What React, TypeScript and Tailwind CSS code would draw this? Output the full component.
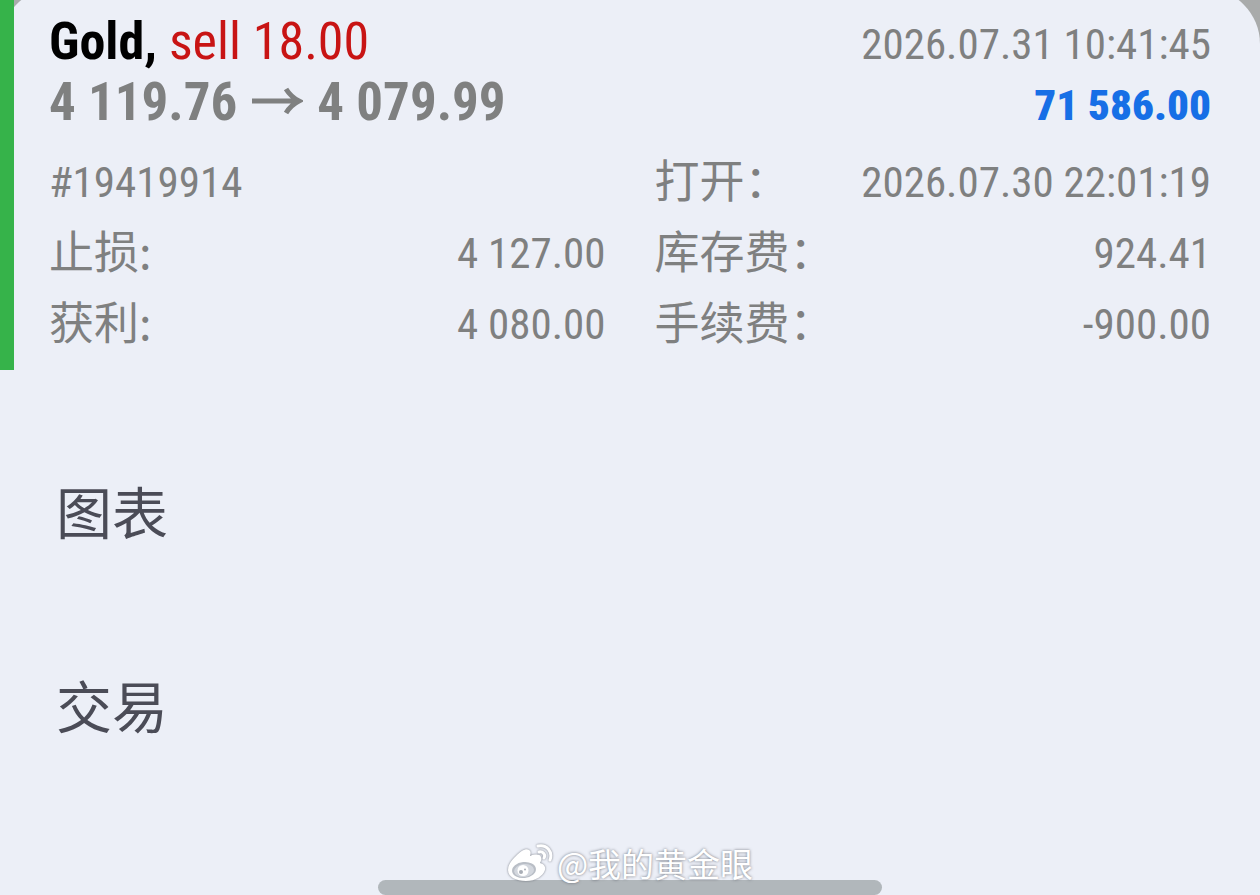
import type { ReactNode } from 'react';

function Detail({ label, value }: { label: ReactNode; value?: string }) {
  return (
    <div className="flex items-center justify-between">
      <dt>{label}</dt>
      <dd>{value}</dd>
    </div>
  );
}

function Label({ children }: { children: string }) {
  return <span className="block h-[71px] font-['Noto_Sans_CJK_SC',sans-serif] text-[45px] leading-[64px]">{children}</span>;
}

function WeiboMark() {
  return (
    <svg viewBox="0 0 46 40" className="h-10 w-[46px] drop-shadow-[0_0_1px_rgba(90,95,105,0.8)]" aria-hidden="true">
      <path
        fill="#fff"
        d="M9 13c5-5 10-8 13-6 2 1 2 3 1 6 5-2 10-2 11 1 1 2 0 4-1 6 4 1 6 4 5 7-2 6-9 11-19 11C9 38 1 34 1 27c0-5 3-9 8-14z"
      />
      <ellipse cx="17" cy="27" rx="12" ry="8" fill="#b9bec6" transform="rotate(-6 17 27)" />
      <ellipse cx="17" cy="27.5" rx="10" ry="6.5" fill="#d3d7de" transform="rotate(-6 17 27)" />
      <circle cx="16" cy="27.500" r="5.500" fill="#fff" />
      <circle cx="14" cy="29" r="2" fill="#a9aeb6" />
      <circle cx="18" cy="26.500" r="1" fill="#a9aeb6" />
      <path d="M31 3c9-2 15 6 12 14" fill="none" stroke="#fff" strokeWidth="3" strokeLinecap="round" />
      <path d="M32 9c4-1 7 3 5 6" fill="none" stroke="#fff" strokeWidth="3" strokeLinecap="round" />
    </svg>
  );
}

export default function App() {
  return (
    <div className="flex min-h-screen flex-col overflow-hidden bg-[#a9abab] font-['Roboto_Condensed','Noto_Sans_CJK_SC',sans-serif]">
      <main className="-mt-3 flex grow flex-col rounded-t-[56px] bg-[#eceff7] pt-3">
        <section className="relative h-[370px] pr-[49px] pl-[49px] pt-3 text-[43px] leading-[60px] text-[#7f8080]">
          <span className="absolute inset-y-0 left-0 w-3.5 bg-[#36b34a]" />
          <div className="flex h-[60px] items-baseline justify-between">
            <h1 className="text-[52px] font-bold text-black">
              Gold, <span className="font-normal text-[#c81414]">sell 18.00</span>
            </h1>
            <time>2026.07.31 10:41:45</time>
          </div>
          <div className="flex h-[60px] items-baseline justify-between font-bold">
            <p className="text-[53px]">
              4 119.76
              <svg viewBox="0 0 52 30" className="mx-[14px] inline-block h-[30px] w-[52px] align-[4px]" aria-label="→">
                <path d="M1 15h47M35 3q5 8 13 12q-8 4-13 12" fill="none" stroke="currentColor" strokeWidth="5" />
              </svg>
              4 079.99
            </p>
            <strong className="text-[#176fe6]">71 586.00</strong>
          </div>
          <dl className="mt-[15px] grid grid-cols-2 gap-x-[49px] leading-[71px]">
            <Detail label="#19419914" />
            <Detail label={<Label>打开：</Label>} value="2026.07.30 22:01:19" />
            <Detail label={<Label>止损:</Label>} value="4 127.00" />
            <Detail label={<Label>库存费：</Label>} value="924.41" />
            <Detail label={<Label>获利:</Label>} value="4 080.00" />
            <Detail label={<Label>手续费：</Label>} value="-900.00" />
          </dl>
        </section>
        <nav className="flex flex-col pt-12 text-[56px] text-[#4b4c57]">
          <button type="button" className="h-[194px] px-14 text-left">图表</button>
          <button type="button" className="h-[194px] px-14 text-left">交易</button>
        </nav>
        <footer className="relative mt-auto flex h-[52px] justify-center">
          <span className="absolute bottom-0 left-[30%] h-[15px] w-[40%] rounded-full bg-[#b1b7bb]" />
          <p className="relative flex h-10 items-center gap-1 font-['Noto_Sans_CJK_SC',sans-serif] text-[33px] leading-10 text-white [text-shadow:0_0_3px_rgba(80,85,95,0.8)]">
            <WeiboMark />
            @我的黄金眼
          </p>
        </footer>
      </main>
    </div>
  );
}
